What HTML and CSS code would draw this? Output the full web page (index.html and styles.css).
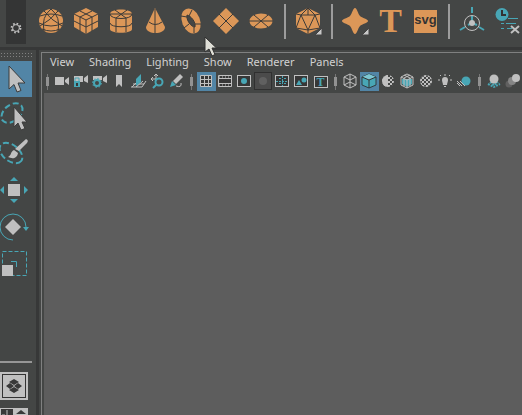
FILE: index.html
```html
<!DOCTYPE html>
<html lang="en">
<head>
<meta charset="utf-8">
<title>3D workspace</title>
<link rel="stylesheet" href="styles.css">
</head>
<body>
<div class="app">
  <header class="shelf">
    <button class="shelf-settings" aria-label="Shelf settings">
      <svg width="20" height="44" viewBox="-10 -28 20 44"><circle r="3.4" class="line-light"/><circle r="4.4" class="line-light thick" stroke-dasharray="1.6 1.86"/></svg>
    </button>
    <div class="shelf-items">
      <button aria-label="Sphere"><svg class="solid" viewBox="-17 -21 35 42"><circle r="12"/><path d="M-11 -5Q0 -9 11 -5M-12 2Q0 8 12 2M-9 8Q0 12 9 8M0 -12Q-10 -4 -7 10M0 -12Q10 -4 7 10M-7 -10Q0 -1 11 5M7 -10Q0 -1 -11 5"/></svg></button>
      <button aria-label="Cube"><svg class="solid" viewBox="-17 -21 35 42"><path d="M0-13 12-7V6L0 13-12 6V-7Z"/><path d="M-12-7 0-1 12-7M0-1V13M-6-10 6-4V10M6-10-6-4V10M-12 0 0 6 12 0"/></svg></button>
      <button aria-label="Cylinder"><svg class="solid" viewBox="-17 -21 35 42"><path d="M-11-7C-11-13 11-13 11-7V8C11 13-11 13-11 8Z"/><path d="M-11-7C-11-1 11-1 11-7M-11-7H11M-6-11 5-3V11M6-11-5-3V11M-11 2C-11 7 11 7 11 2"/></svg></button>
      <button aria-label="Cone"><svg class="solid" viewBox="-17 -21 35 42"><path d="M-1-13 9 6C9 14-10 14-10 6Z"/><path d="M-1-12V12M-7 1Q-1 6 6 1"/></svg></button>
      <button aria-label="Torus"><svg class="solid" viewBox="-17 -21 35 42"><ellipse rx="9" ry="13" transform="rotate(-22)"/><path class="hole" d="M-4-6C0-5 5 1 4 6C0 6-5-1-4-6Z"/><path d="M-10-5-4-4M1-11-2-5M10 3 4 3M3 12 3 6M-7 7-2 3"/></svg></button>
      <button aria-label="Plane"><svg class="solid" viewBox="-17 -21 35 42"><path d="M0-13 13 0 0 13-13 0Z"/><path d="M-7-7 7 7M7-7-7 7"/></svg></button>
      <button aria-label="Disc"><svg class="solid" viewBox="-17 -21 35 42"><ellipse rx="11.5" ry="7.5"/><path d="M-12 0H12M-7-6 7 6M7-6-7 6"/></svg></button>
      <span class="divider"></span>
      <button aria-label="Platonic solid"><svg class="solid" viewBox="-17 -21 35 42"><path d="M0-13 12-7V7L0 13-12 7V-7Z"/><path d="M0-13V-6M-12-7-7-6H7L12-7M-7-6 0-13 7-6M-7-6 0 9 7-6M-7-6-12 7 0 9 12 7 7-6M0 9V13"/><path class="corner" d="M14 7V14H7Z"/></svg></button>
      <span class="divider"></span>
      <button aria-label="Super shape"><svg class="solid" viewBox="-17 -21 35 42"><path d="M0-13C2-13 3-7 5-5C7-3 13-2 13 0C13 2 7 3 5 5C3 7 2 13 0 13C-2 13-3 7-5 5C-7 3-13 2-13 0C-13-2-7-3-5-5C-3-7-2-13 0-13Z"/><path class="corner" d="M14 7V14H7Z"/></svg></button>
      <button class="type-button" aria-label="Type">T</button>
      <button class="svg-button"><span>svg</span></button>
      <span class="divider"></span>
      <button aria-label="Pivot"><svg viewBox="-17 -21 35 42"><path class="line-teal" d="M0-14V-8M-12 9-7 6M12 9 7 6M0-5V2L-4 4M0 2 5 4"/><circle cy="2" r="7.5" class="line-light"/><circle cy="2" r="3" class="fill-light"/></svg></button>
      <button aria-label="Delete history"><svg viewBox="-17 -21 35 42"><circle cx="-5" cy="-6.5" r="6.5" class="fill-teal"/><path class="line-dark" d="M-5-11V-6H-1"/><path class="line-teal thin" d="M1-2.500H11M-6 2.500H-3M-1 2.500H9M-6 7.500H-3M0 7.500H5"/><path class="line-light thick" d="M4 5 12 12M12 5 4 12"/></svg></button>
    </div>
  </header>
  <div class="workspace">
    <aside class="toolbox">
      <span class="handle"></span>
      <button class="active" aria-label="Select"><svg viewBox="0 0 32 36"><path class="pointer" d="M9 5V28L14 23.500 17 31 21 29.500 18 22H25Z"/></svg></button>
      <button aria-label="Lasso"><svg viewBox="0 0 32 36"><ellipse cx="12" cy="15" rx="12" ry="8" transform="rotate(-40 12 15)" class="line-teal dash"/><path class="pointer" d="M14 9V29L18 25 21 32 25 30.500 22 24H27Z"/></svg></button>
      <button aria-label="Paint select"><svg viewBox="0 0 32 36"><ellipse cx="11" cy="18" rx="13" ry="8" transform="rotate(38 11 18)" class="line-teal dash"/><path class="fill-light" d="M26 4Q29 5 27 8L19 16 15 14ZM14 15 18 18C17 24 12 24 8 22C12 20 10 17 14 15Z"/></svg></button>
      <button aria-label="Move"><svg viewBox="0 0 32 36"><path class="fill-light" d="M8 12H20V24H8Z"/><path class="fill-teal" d="M14 5 18 9H10ZM14 31 18 27H10ZM0 18 4 14V22ZM28 18 24 14V22Z"/></svg></button>
      <button aria-label="Rotate"><svg viewBox="0 0 32 36"><path class="fill-light" d="M13 10 21 18 13 26 5 18Z"/><path class="line-teal thin" d="M13 31A13 13 0 1 1 26 18"/><path class="fill-teal" d="M23 18H29L26 22Z"/></svg></button>
      <button aria-label="Scale"><svg viewBox="0 0 32 36"><rect x="2.5" y="5.5" width="24" height="24" class="line-teal thin" stroke-dasharray="4 2"/><path class="line-teal thin" d="M11 15.500H16.500V21"/><path class="fill-light" d="M2 19H13V30H2Z"/></svg></button>
      <span class="toolbox-rule"></span>
      <button class="layout-button" aria-label="Single view"><svg width="28" height="28" viewBox="-14 -14 28 28"><rect x="-11.5" y="-11.5" width="23" height="23" class="line-dark thin"/><path class="fill-dark" d="M0-7 5-4 0-1-5-4ZM0 1 5 4 0 7-5 4ZM-8 0-4-3 0 0-4 3ZM8 0 4-3 0 0 4 3Z"/></svg></button>
      <button class="layout-button" aria-label="Four view"><svg width="28" height="28" viewBox="0 0 28 28"><path class="fill-dark" d="M1 1H13V27H1ZM21 2 26 6H16Z"/><path class="line-light" d="M2 7H5M7 2V12"/></svg></button>
    </aside>
    <main class="panel">
      <nav class="menu">
        <a href="#">View</a><a href="#">Shading</a><a href="#">Lighting</a><a href="#">Show</a><a href="#">Renderer</a><a href="#">Panels</a>
      </nav>
      <div class="panel-tools">
        <span class="grip"></span>
        <button aria-label="Camera"><svg viewBox="-9 -9 19 19"><path class="fill-light" d="M-7-4H2V4H-7ZM3-1 7-4V4L3 1Z"/></svg></button>
        <button aria-label="Lock camera"><svg viewBox="-9 -9 19 19"><path class="fill-light" d="M-7-5H2V1H-7ZM3-3 7-6V2L3 0Z"/><path class="lock" d="M-7 0H-1V6H-7Z"/><path class="line-teal thin" d="M-6 0V-3H-2V0"/><path class="fill-dark" d="M-5 2H-3V5H-5Z"/></svg></button>
        <button aria-label="Camera attributes"><svg viewBox="-9 -9 19 19"><path class="fill-light" d="M-7-5H2V-1H-7ZM3-3 7-6V2L3 0Z"/><circle cx="-3" cy="2" r="3" class="line-teal fill-panel"/><circle cx="-3" cy="2" r="4.5" class="line-teal thin" stroke-dasharray="1.5 2"/></svg></button>
        <button aria-label="Bookmarks"><svg viewBox="-9 -9 19 19"><path class="fill-light" d="M-3-6H3V6L0 3-3 6Z"/></svg></button>
        <button aria-label="Image plane"><svg viewBox="-9 -9 19 19"><path class="line-light thin" d="M-6 6 0 0M-7 6H4L8 0M-5 3H6M-2 6 5 0"/><path class="fill-teal" d="M-2-2 3-7V1L-2 5Z"/></svg></button>
        <button aria-label="Pan and zoom"><svg viewBox="-9 -9 19 19"><path class="line-light thin" d="M-6-2H4M-1-7V1M-4-4-6-2-4 0M-3-5-1-7 1-5"/><circle cx="2" cy="1" r="3.5" class="line-teal fill-panel"/><path class="line-teal" d="M0 3-4 7"/></svg></button>
        <button aria-label="Grease pencil"><svg viewBox="-9 -9 19 19"><path class="fill-light" d="M4-7 7-4 0 3-3 0Z"/><path class="fill-teal" d="M-4 0 0 4-6 6Z"/><path class="line-light thin" d="M0 5Q6 7 5 2"/></svg></button>
        <span class="grip"></span>
        <button class="active" aria-label="Grid"><svg viewBox="-9 -9 19 19"><path class="frame" d="M-5.500-5.500H5.500V5.500H-5.500ZM-5.500-1.500H5.500M-5.500 2.500H5.500M-1.500-5.500V5.500M2.500-5.500V5.500"/></svg></button>
        <button aria-label="Film gate"><svg viewBox="-9 -9 19 19"><path class="frame" d="M-6.500-5.500H6.500V5.500H-6.500ZM-6-2.500H6M-6 2.500H6"/><path class="line-light" stroke-dasharray="1 2" d="M-6-4H6M-6 4H6"/></svg></button>
        <button aria-label="Resolution gate"><svg viewBox="-9 -9 19 19"><rect x="-6.5" y="-5.5" width="13" height="11" class="frame"/><circle r="3" class="fill-teal"/></svg></button>
        <button aria-label="Gate mask"><svg viewBox="-9 -9 19 19"><rect x="-8.5" y="-8.5" width="17" height="17" class="frame-off"/><circle r="4" class="fill-off"/></svg></button>
        <button aria-label="Field chart"><svg viewBox="-9 -9 19 19"><rect x="-6.5" y="-5.5" width="13" height="11" class="frame"/><path class="line-teal thin" stroke-dasharray="2 1" d="M-6 .500H6M.500-5V5"/><path class="line-teal" d="M-2-3V-2M3-3V-2M-2 2V3M3 2V3"/></svg></button>
        <button aria-label="Safe action"><svg viewBox="-9 -9 19 19"><rect x="-6.5" y="-5.5" width="13" height="11" class="frame"/><path class="fill-teal" d="M-2-1 1 4H-5Z"/><circle cx="3" cy="-1" r="2.5" class="fill-teal"/></svg></button>
        <button class="safe-title" aria-label="Safe title"><span>T</span></button>
        <span class="grip"></span>
        <button aria-label="Wireframe"><svg viewBox="-9 -9 19 19"><path class="line-light thin" d="M0-7 6-4V4L0 7-6 4V-4ZM-6-4 0-1 6-4M0-1V7M0-7V-1M-6 4 0 1 6 4"/></svg></button>
        <button class="active" aria-label="Smooth shade"><svg viewBox="-9 -9 19 19"><path class="shaded" d="M0-7 7-4V4L0 7-7 4V-4Z"/><path class="shaded-top" d="M0-7 7-4 0-1-7-4Z"/><path class="line-dark thin" d="M-7-4 0-1 7-4M0-1V7"/></svg></button>
        <button aria-label="Default material"><svg viewBox="-9 -9 19 19"><circle r="6" fill="url(#checks)"/><path class="fill-light" d="M0-6A6 6 0 0 0 0 6Z"/></svg></button>
        <button aria-label="Wireframe on shaded"><svg viewBox="-9 -9 19 19"><path class="fill-teal" d="M-5-2 5-2V3L0 6-5 3Z"/><path class="line-light thin" d="M0-7 6-4V4L0 7-6 4V-4ZM-6-4 0-1 6-4M0-1V7M-3-6 3-3V5M3-6-3-3V5"/></svg></button>
        <button aria-label="Textured"><svg viewBox="-9 -9 19 19"><defs><pattern id="checks" width="4" height="4" patternUnits="userSpaceOnUse"><path class="fill-light" d="M0 0H2V2H0ZM2 2H4V4H2Z"/></pattern></defs><circle r="6" fill="url(#checks)"/><circle r="5.5" class="line-light faint"/></svg></button>
        <button aria-label="Lights"><svg viewBox="-9 -9 19 19"><path class="fill-light" d="M-3-1A3 3 0 0 1 3-1C3 1 2 2 2 4H-2C-2 2-3 1-3-1ZM-1 5H1V6H-1Z"/><path class="line-light thin" d="M0-7V-5M-7-1H-5M5-1H7M-5-6-4-5M5-6 4-5"/></svg></button>
        <button aria-label="Shadows"><svg viewBox="-9 -9 19 19"><circle cx="2" cy="0" r="4.5" class="fill-teal"/><path class="line-light thin" d="M-7 2-4 5M-7 0-2 5M-4 0 1 5"/></svg></button>
        <span class="grip"></span>
        <button aria-label="Ambient occlusion"><svg viewBox="-9 -9 19 19"><path class="line-teal dash-fine" d="M-6 3 0 6 6 3M-4 1 0 4 4 1"/><circle cy="-2" r="4.5" class="fill-light"/></svg></button>
        <button aria-label="Motion blur"><svg viewBox="-9 -9 19 19"><circle cx="-4" cy="3" r="3.5" class="fill-off"/><circle cx="-1" cy="0" r="4" class="fill-mid"/><circle cx="3" cy="-3" r="4" class="fill-light"/></svg></button>
      </div>
      <section class="viewport" aria-label="Viewport"></section>
    </main>
  </div>
  <svg class="cursor" width="14" height="21" viewBox="0 0 14 21"><path d="M1 1V16L5 13 8 20 11 18.500 8 12H12.500Z"/></svg>
</div>
</body>
</html>
```

FILE: styles.css
```css
:root {
  --base: #444645;
  --dark: #373838;
  --light: #c0c0c0;
  --rule: #969696;
  --teal: #48a6b5;
  --orange: #dc9758;
  --active: #5285a6;
}
* { box-sizing: border-box; }
body {
  margin: 0;
  background: var(--base);
  font-family: "Noto Sans", "Open Sans", sans-serif;
}
.app { display: flex; flex-direction: column; height: 100vh; overflow: hidden; }
button {
  flex: none;
  display: flex;
  align-items: center;
  justify-content: center;
  padding: 0;
  border: 0;
  background: none;
}
svg { display: block; fill: none; }

.shelf {
  flex: none;
  display: flex;
  height: 50px;
  padding-left: 6px;
  border-bottom: 3px solid var(--dark);
  overflow: hidden;
}
.shelf-settings { height: 44px; width: 20px; background: #343535; }
.shelf-items { display: flex; align-items: flex-start; padding-left: 8px; }
.shelf-items button { width: 35px; height: 42px; }
.shelf-items svg { width: 35px; height: 42px; }
.divider { flex: none; width: 2px; height: 35px; margin: 4px 5px; background: #9c9c9c; }
.shelf-items .type-button {
  color: var(--orange);
  font: bold 34px/42px "Liberation Serif", serif;
}
.svg-button span {
  width: 23px;
  height: 23px;
  background: var(--orange);
  color: #333;
  font: bold 13px/20px "Liberation Sans", sans-serif;
  text-align: center;
}

.fill-light { fill: var(--light); }
.fill-mid { fill: #858585; }
.fill-off { fill: #606060; }
.fill-teal, .lock { fill: var(--teal); }
.fill-dark { fill: #393939; }
.fill-panel { fill: var(--base); }
.line-light { stroke: var(--light); stroke-width: 1; }
.line-teal { stroke: var(--teal); stroke-width: 2; }
.line-dark { stroke: #333; stroke-width: 2; }
.line-light.thin, .line-teal.thin, .line-dark.thin { stroke-width: 1; }
.thick { stroke-width: 2; }
.faint { opacity: .4; }
.dash { stroke-dasharray: 6 3; }
.dash-fine { stroke-dasharray: 2 1; }
.pointer { fill: var(--light); stroke: #3c3c3c; stroke-width: 1; }
.frame { fill: #373737; stroke: var(--light); }
.frame-off { fill: #4b4b4b; stroke: #303030; }
.shaded { fill: var(--teal); stroke: #303c40; }
.shaded-top { fill: #7cc6d2; }
.solid { fill: var(--orange); }
.solid path + path, .solid circle + path, .solid ellipse + path { fill: none; stroke: #3b3a38; stroke-width: 1; }
.solid .corner.corner { fill: #c8c8c8; stroke: #444; }
.solid .hole.hole { fill: var(--base); }

.workspace { flex: 1; display: flex; min-height: 0; }
.toolbox {
  flex: none;
  display: flex;
  flex-direction: column;
  gap: 1px;
  width: 39px;
  padding-top: 2px;
  border-right: 3px solid var(--dark);
  overflow: hidden;
}
.handle {
  flex: none;
  width: 32px;
  height: 8px;
  background: radial-gradient(circle, #818181 1px, transparent 1px) 0 0 / 3px 3px;
  background-clip: content-box;
  padding-bottom: 2px;
}
.toolbox button { width: 32px; height: 36px; }
.toolbox svg { flex: none; }
.toolbox .active, .panel-tools .active { background: var(--active); }
.toolbox-rule { flex: none; width: 32px; height: 2px; margin: 78px 0 8px; background: var(--rule); }
.toolbox .layout-button {
  width: 28px;
  height: 28px;
  margin-bottom: 7px;
  background: var(--light);
}

.panel {
  flex: 1;
  min-width: 0;
  display: flex;
  flex-direction: column;
  margin: 2px 0 0 2px;
  border: solid #7f8080;
  border-width: 1px 0 0 1px;
}
.menu {
  flex: none;
  display: flex;
  gap: 15px;
  height: 19px;
  padding-left: 8px;
  overflow: hidden;
}
.menu a {
  color: #d2d2d2;
  font-size: 11px;
  line-height: 18px;
  text-decoration: none;
}
.panel-tools { flex: none; display: flex; height: 21px; overflow: hidden; }
.panel-tools button, .panel-tools svg { width: 19px; height: 19px; }
.grip {
  flex: none;
  width: 11px;
  height: 19px;
  background:
    linear-gradient(#929292, #929292) center / 3px 9px no-repeat,
    linear-gradient(#777, #777) center / 1px 16px no-repeat;
}
.safe-title span {
  width: 14px;
  height: 12px;
  border: 1px solid var(--light);
  background: #373737;
  color: var(--teal);
  font: bold 12px/10px "Liberation Serif", serif;
}
.viewport { flex: 1; margin-left: 2px; background: #5d5d5d; }
.cursor { position: absolute; left: 204px; top: 36px; }
.cursor path { fill: #deded6; stroke: #303030; }
```
